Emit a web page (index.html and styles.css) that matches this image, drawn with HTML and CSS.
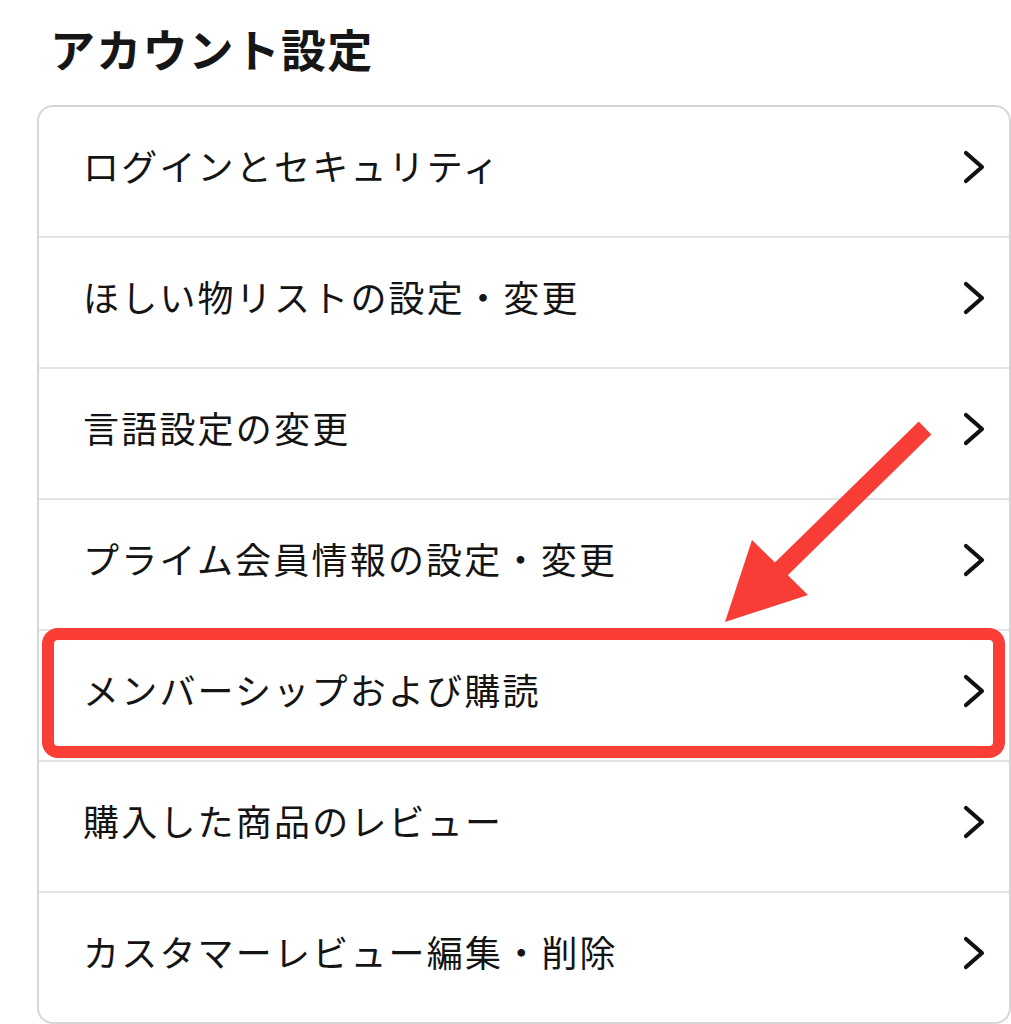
FILE: index.html
```html
<!DOCTYPE html>
<html lang="ja">
<head>
<meta charset="utf-8">
<link rel="stylesheet" href="styles.css">
</head>
<body>
<div class="page">
  <h1 class="title">アカウント設定</h1>
  <div class="card">
    <div class="row"><span class="label">ログインとセキュリティ</span><svg class="chev" viewBox="0 0 24 36"><path d="M4 4 L20 18 L4 32"/></svg></div>
    <div class="row"><span class="label">ほしい物リストの設定・変更</span><svg class="chev" viewBox="0 0 24 36"><path d="M4 4 L20 18 L4 32"/></svg></div>
    <div class="row"><span class="label">言語設定の変更</span><svg class="chev" viewBox="0 0 24 36"><path d="M4 4 L20 18 L4 32"/></svg></div>
    <div class="row"><span class="label">プライム会員情報の設定・変更</span><svg class="chev" viewBox="0 0 24 36"><path d="M4 4 L20 18 L4 32"/></svg></div>
    <div class="row highlight"><span class="label">メンバーシップおよび購読</span><svg class="chev" viewBox="0 0 24 36"><path d="M4 4 L20 18 L4 32"/></svg></div>
    <div class="row"><span class="label">購入した商品のレビュー</span><svg class="chev" viewBox="0 0 24 36"><path d="M4 4 L20 18 L4 32"/></svg></div>
    <div class="row"><span class="label">カスタマーレビュー編集・削除</span><svg class="chev" viewBox="0 0 24 36"><path d="M4 4 L20 18 L4 32"/></svg></div>
  </div>
  <svg class="arrow" viewBox="0 0 240 230" width="240" height="230">
    <line x1="215" y1="18" x2="60" y2="170" stroke="#f83d37" stroke-width="18"/>
    <polygon points="15,212 42,130 98,185" fill="#f83d37"/>
  </svg>
</div>
</body>
</html>
```
FILE: styles.css
```css
html, body {
  margin: 0;
  padding: 0;
  background: #ffffff;
}
body {
  font-family: "Noto Sans CJK JP", "Noto Sans", sans-serif;
  color: #111111;
}
.page {
  position: relative;
  width: 1011px;
  height: 1024px;
  overflow: hidden;
}
.title {
  margin: 0;
  padding: 19px 0 0 50px;
  height: 83px;
  box-sizing: border-box;
  font-size: 45px;
  font-weight: 700;
  line-height: 60px;
  letter-spacing: 1.2px;
  color: #161616;
}
.card {
  margin: 22px 0 0 37px;
  width: 974px;
  box-sizing: border-box;
  border: 2px solid #d6d6d6;
  border-radius: 16px;
  background: #fff;
}
.row {
  position: relative;
  display: flex;
  align-items: center;
  justify-content: space-between;
  height: 131px;
  box-sizing: border-box;
  padding: 0 23px 14px 44px;
  border-bottom: 2px solid #e3e3e3;
}
.row:last-child {
  border-bottom: none;
  height: 129px;
}
.label {
  font-size: 36px;
  font-weight: 400;
  letter-spacing: 2.2px;
  color: #141414;
}
.chev {
  width: 24px;
  height: 36px;
  margin-top: 4px;
  fill: none;
  stroke: #111;
  stroke-width: 4.2;
  stroke-linecap: round;
  stroke-linejoin: round;
}
.highlight::after {
  content: "";
  position: absolute;
  left: 3px;
  top: -3px;
  width: 963px;
  height: 130px;
  box-sizing: border-box;
  border: 12px solid #fa3d35;
  border-radius: 16px;
}
.arrow {
  position: absolute;
  left: 710px;
  top: 410px;
}
```
